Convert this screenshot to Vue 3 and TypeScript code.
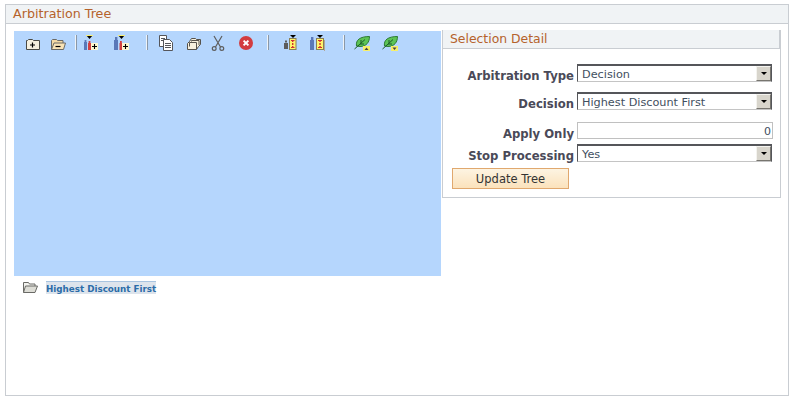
<script setup lang="ts">
const rootName: string = 'Highest Discount First'
</script>

<template>
  <div class="page">
    <h1 class="page-title">Arbitration Tree</h1>
    <div class="columns">
      <div class="left">
        <div class="canvas">
          <div class="toolbar">
            <svg class="ico" viewBox="0 0 16 16"><path d="M1.5 14.5V5.5H2.5L3.5 4.5H7.5L8.5 5.5H14.5V14.5Z" fill="#f6f0de" stroke="#4a4a44"/><path d="M7.5 7.5V12.5M5 10H10" stroke="#000" stroke-width="1.2"/></svg>
            <svg class="ico m9" viewBox="0 0 16 16"><path d="M1.5 14.5V5.5L2.5 4.5H6.5L7.5 5.5H13V8" fill="#f3d9a4" stroke="#6a6a66"/><path d="M1.5 14.5L4 8H15.5L13.5 14.5Z" fill="#f8e3b6" stroke="#6a6a66"/><path d="M5.5 11.5H10.5" stroke="#000" stroke-width="1.2"/></svg>
            <span class="sep m9"></span>
            <svg class="ico m5" viewBox="0 0 16 16"><path d="M4 0H11L7.5 4Z" fill="#000"/><path d="M4 0.5H11" stroke="#f6ee70"/><rect x="2" y="7" width="3" height="8" fill="#5a78b8"/><rect x="2.6" y="5" width="1.8" height="2" fill="#5a78b8"/><rect x="6" y="8" width="3" height="7" fill="#d24040"/><rect x="6.6" y="6" width="1.8" height="2" fill="#d24040"/><rect x="9" y="8" width="7" height="7" fill="#fdf8cf"/><path d="M12.5 9V14M10 11.5H15" stroke="#000" stroke-width="1.1"/></svg>
            <svg class="ico m15" viewBox="0 0 16 16"><path d="M5 0H12L8.5 4Z" fill="#000"/><path d="M5 0.5H12" stroke="#f6ee70"/><rect x="1" y="5" width="4" height="10" fill="#5a78b8"/><rect x="2" y="2" width="2.4" height="3" fill="#5a78b8"/><rect x="6.5" y="8" width="3" height="7" fill="#d24040"/><rect x="7" y="6" width="1.8" height="2" fill="#d24040"/><rect x="9" y="8" width="7" height="7" fill="#fdf8cf"/><path d="M12.5 9V14M10 11.5H15" stroke="#000" stroke-width="1.1"/></svg>
            <span class="sep m17"></span>
            <svg class="ico m10" viewBox="0 0 16 16"><path d="M1.5 0.5H8.5V11.5H1.5Z" fill="#fff" stroke="#55565a"/><path d="M3 3.5H7M3 5.5H5" stroke="#55565a"/><path d="M5.5 4.5H11.5L14.5 7.5V15.5H5.5Z" fill="#fff" stroke="#55565a"/><path d="M7 8.5H13M7 10.5H13M7 12.5H13" stroke="#55565a"/></svg>
            <svg class="ico m12" viewBox="0 0 16 16"><path d="M1.5 14.5V8.5L3.5 6.5L5.5 3.5H9.5L10.5 4.5H14.5V9.5L12.5 11.5L10.5 14.5Z" fill="#f6f0de" stroke="#55524c"/><path d="M3.5 11.5V7.5H10.5V14.5M5.5 6.5V5.5H13V10" fill="none" stroke="#55524c"/></svg>
            <svg class="ico m8" viewBox="0 0 16 16"><path d="M4 1L10.5 12M12 1L5.5 12" fill="none" stroke="#5d5d5d" stroke-width="1.2"/><circle cx="4.2" cy="13.5" r="1.9" fill="none" stroke="#5d5d5d" stroke-width="1.2"/><circle cx="11.8" cy="13.5" r="1.9" fill="none" stroke="#5d5d5d" stroke-width="1.2"/></svg>
            <svg class="ico m12" viewBox="0 0 16 16"><circle cx="8" cy="8" r="7" fill="#d23c40"/><path d="M5.6 5.6L10.4 10.4M10.4 5.6L5.6 10.4" stroke="#fff" stroke-width="2"/></svg>
            <span class="sep m13"></span>
            <svg class="ico m13" viewBox="0 0 16 16"><rect x="2" y="8" width="4" height="6" fill="#5c5c5c"/><rect x="3" y="5.5" width="2" height="2" fill="#5c5c5c"/><path d="M8 0H14L11 3Z" fill="#000"/><rect x="7.5" y="3.5" width="6.5" height="11" fill="#fff36b" stroke="#8b7f55"/><path d="M10.7 5V13" stroke="#d03030" stroke-width="1.4" stroke-dasharray="2 1"/><path d="M9 5.5H12.5M9 12.5H12.5" stroke="#d03030"/></svg>
            <svg class="ico m11" viewBox="0 0 16 16"><rect x="1" y="5" width="4" height="10" fill="#5a78b8"/><rect x="2" y="2" width="2.4" height="3" fill="#5a78b8"/><path d="M8 0H14L11 3Z" fill="#000"/><rect x="15" y="5" width="1" height="11" fill="#b0a89a"/><rect x="7.5" y="3.5" width="7" height="11" fill="#fff36b" stroke="#8b7f55"/><path d="M11 5V13" stroke="#d03030" stroke-width="1.4" stroke-dasharray="2 1"/><path d="M9 5.5H13M9 12.5H13" stroke="#d03030"/></svg>
            <span class="sep m18"></span>
            <svg class="ico m9" viewBox="0 0 16 16"><path d="M2.5 11C1.5 5 6 1.5 15.5 1.5C15.5 7 12.5 11.5 6 11.5Z" fill="#5cc455" stroke="#2c7a33"/><path d="M0.5 14L5 10L11 4.5M6 9H10M7 8.5V5" stroke="#1d5a2a" fill="none"/><rect x="9" y="11" width="7" height="5" fill="#f7ef6a"/><path d="M10.5 15H14.5L12.5 12.5Z" fill="#444"/></svg>
            <svg class="ico m12" viewBox="0 0 16 16"><path d="M2.5 11C1.5 5 6 1.5 15.5 1.5C15.5 7 12.5 11.5 6 11.5Z" fill="#5cc455" stroke="#2c7a33"/><path d="M0.5 14L5 10L11 4.5M6 9H10M7 8.5V5" stroke="#1d5a2a" fill="none"/><rect x="9" y="11" width="7" height="5" fill="#f7ef6a"/><path d="M10.5 12.5H14.5L12.5 15Z" fill="#444"/></svg>
          </div>
        </div>
        <div class="tree-row">
          <svg class="tree-ico" viewBox="0 0 16 13"><path d="M1.5 11.5V1.5H6.5L7.5 3H13V5" fill="#f2f2ee" stroke="#6a6a66"/><path d="M1.5 11.5L3.5 5H15.5L13 11.5Z" fill="#ddddd6" stroke="#6a6a66"/></svg>
          <a class="tree-link">{{ rootName }}</a>
        </div>
      </div>

      <section class="detail">
        <h2 class="detail-title">Selection Detail</h2>
        <div class="form">
          <div class="row r1">
            <label class="lbl">Arbitration Type</label>
            <div class="select"><span class="val">Decision</span><span class="drop"><i></i></span></div>
          </div>
          <div class="row r2">
            <label class="lbl">Decision</label>
            <div class="select"><span class="val">Highest Discount First</span><span class="drop"><i></i></span></div>
          </div>
          <div class="row r3">
            <label class="lbl">Apply Only</label>
            <div class="num">0</div>
          </div>
          <div class="row r4">
            <label class="lbl">Stop Processing</label>
            <div class="select"><span class="val">Yes</span><span class="drop"><i></i></span></div>
          </div>
          <button class="btn" type="button">Update Tree</button>
        </div>
      </section>
    </div>
  </div>
</template>

<style>
html, body { margin: 0; background: #fff; }
</style>

<style scoped>
.page {
  box-sizing: border-box;
  width: 784px;
  height: 392px;
  margin: 4px 0 0 5px;
  border: 1px solid #c9cdd2;
  font-family: "DejaVu Sans", Verdana, sans-serif;
  font-size: 11px;
}
.page-title {
  margin: 0;
  height: 18px;
  line-height: 17px;
  padding-left: 7px;
  background: #f0f3f5;
  border-bottom: 1px solid #c9cdd2;
  font-size: 12.7px;
  font-weight: normal;
  color: #b5622b;
}
.columns { display: flex; align-items: flex-start; padding: 6px 0 0 8px; }
.left { width: 427px; margin-top: 1px; }
.canvas { height: 245px; background: #b5d6fd; }
.toolbar { display: flex; align-items: flex-start; padding: 4px 0 0 11px; }
.ico { width: 16px; height: 16px; flex: none; display: block; }
.sep {
  flex: none;
  width: 0;
  height: 15px;
  border-left: 1px solid #eef3f8;
  border-right: 1px solid #8a98a8;
}
.m5 { margin-left: 5px; }
.m8 { margin-left: 8px; }
.m9 { margin-left: 9px; }
.m10 { margin-left: 10px; }
.m11 { margin-left: 11px; }
.m12 { margin-left: 12px; }
.m13 { margin-left: 13px; }
.m15 { margin-left: 15px; }
.m17 { margin-left: 17px; }
.m18 { margin-left: 18px; }
.tree-row { display: flex; align-items: flex-start; padding: 5px 0 0 8px; }
.tree-ico { width: 16px; height: 13px; flex: none; }
.tree-link {
  margin-left: 8px;
  height: 13px;
  line-height: 14px;
  background: #dde4ec;
  border-top: 1px solid #a8c4e0;
  box-sizing: border-box;
  font-size: 8.75px;
  font-weight: bold;
  color: #2b6ca8;
  white-space: nowrap;
}
.detail {
  box-sizing: border-box;
  width: 339px;
  height: 168px;
  margin-left: 1px;
  border: 1px solid #c9cdd2;
  border-top: none;
}
.detail-title {
  margin: 0;
  height: 19px;
  line-height: 18px;
  padding-left: 7px;
  box-sizing: border-box;
  background: #f0f3f5;
  border-bottom: 1px solid #c9cdd2;
  border-right: 1px solid #c9cdd2;
  font-size: 12.4px;
  font-weight: normal;
  color: #b5622b;
}
.form { padding: 15px 0 0 9px; }
.row { display: flex; align-items: flex-end; }
.r2 { margin-top: 10px; }
.r3 { margin-top: 12px; }
.r4 { margin-top: 5px; }
.lbl {
  width: 122px;
  text-align: right;
  margin-right: 3px;
  margin-bottom: -1px;
  font-weight: bold;
  font-size: 11.65px;
  line-height: 13px;
  color: #4a4a58;
  white-space: nowrap;
}
.r3 .lbl { margin-bottom: -2px; }
.select {
  box-sizing: border-box;
  width: 195px;
  height: 18px;
  display: flex;
  justify-content: space-between;
  border: 1px solid #55565a;
  border-top-width: 2px;
  border-bottom-color: #c4c4c4;
  background: #fff;
}
.val { padding-left: 4px; line-height: 17px; color: #3f4f60; font-size: 11.25px; }
.drop {
  width: 15px;
  height: 15px;
  box-sizing: border-box;
  background: #d8d5cc;
  border: 1px solid #f4f3ef;
  border-right-color: #77756f;
  border-bottom-color: #77756f;
  display: flex;
  align-items: center;
  justify-content: center;
}
.drop i {
  width: 0;
  height: 0;
  border-left: 3px solid transparent;
  border-right: 3px solid transparent;
  border-top: 3px solid #000;
}
.num {
  box-sizing: border-box;
  width: 196px;
  height: 17px;
  border: 1px solid #c0c0c0;
  background: #fff;
  padding-right: 1px;
  text-align: right;
  line-height: 17px;
  color: #3f4f60;
  font-size: 11px;
}
.btn {
  display: block;
  box-sizing: border-box;
  width: 117px;
  height: 21px;
  margin-top: 6px;
  padding: 0;
  border: 1px solid #e0a86e;
  background: linear-gradient(#fdf4e2, #fbe2bc);
  font-family: inherit;
  font-size: 11.5px;
  color: #333;
}
</style>
